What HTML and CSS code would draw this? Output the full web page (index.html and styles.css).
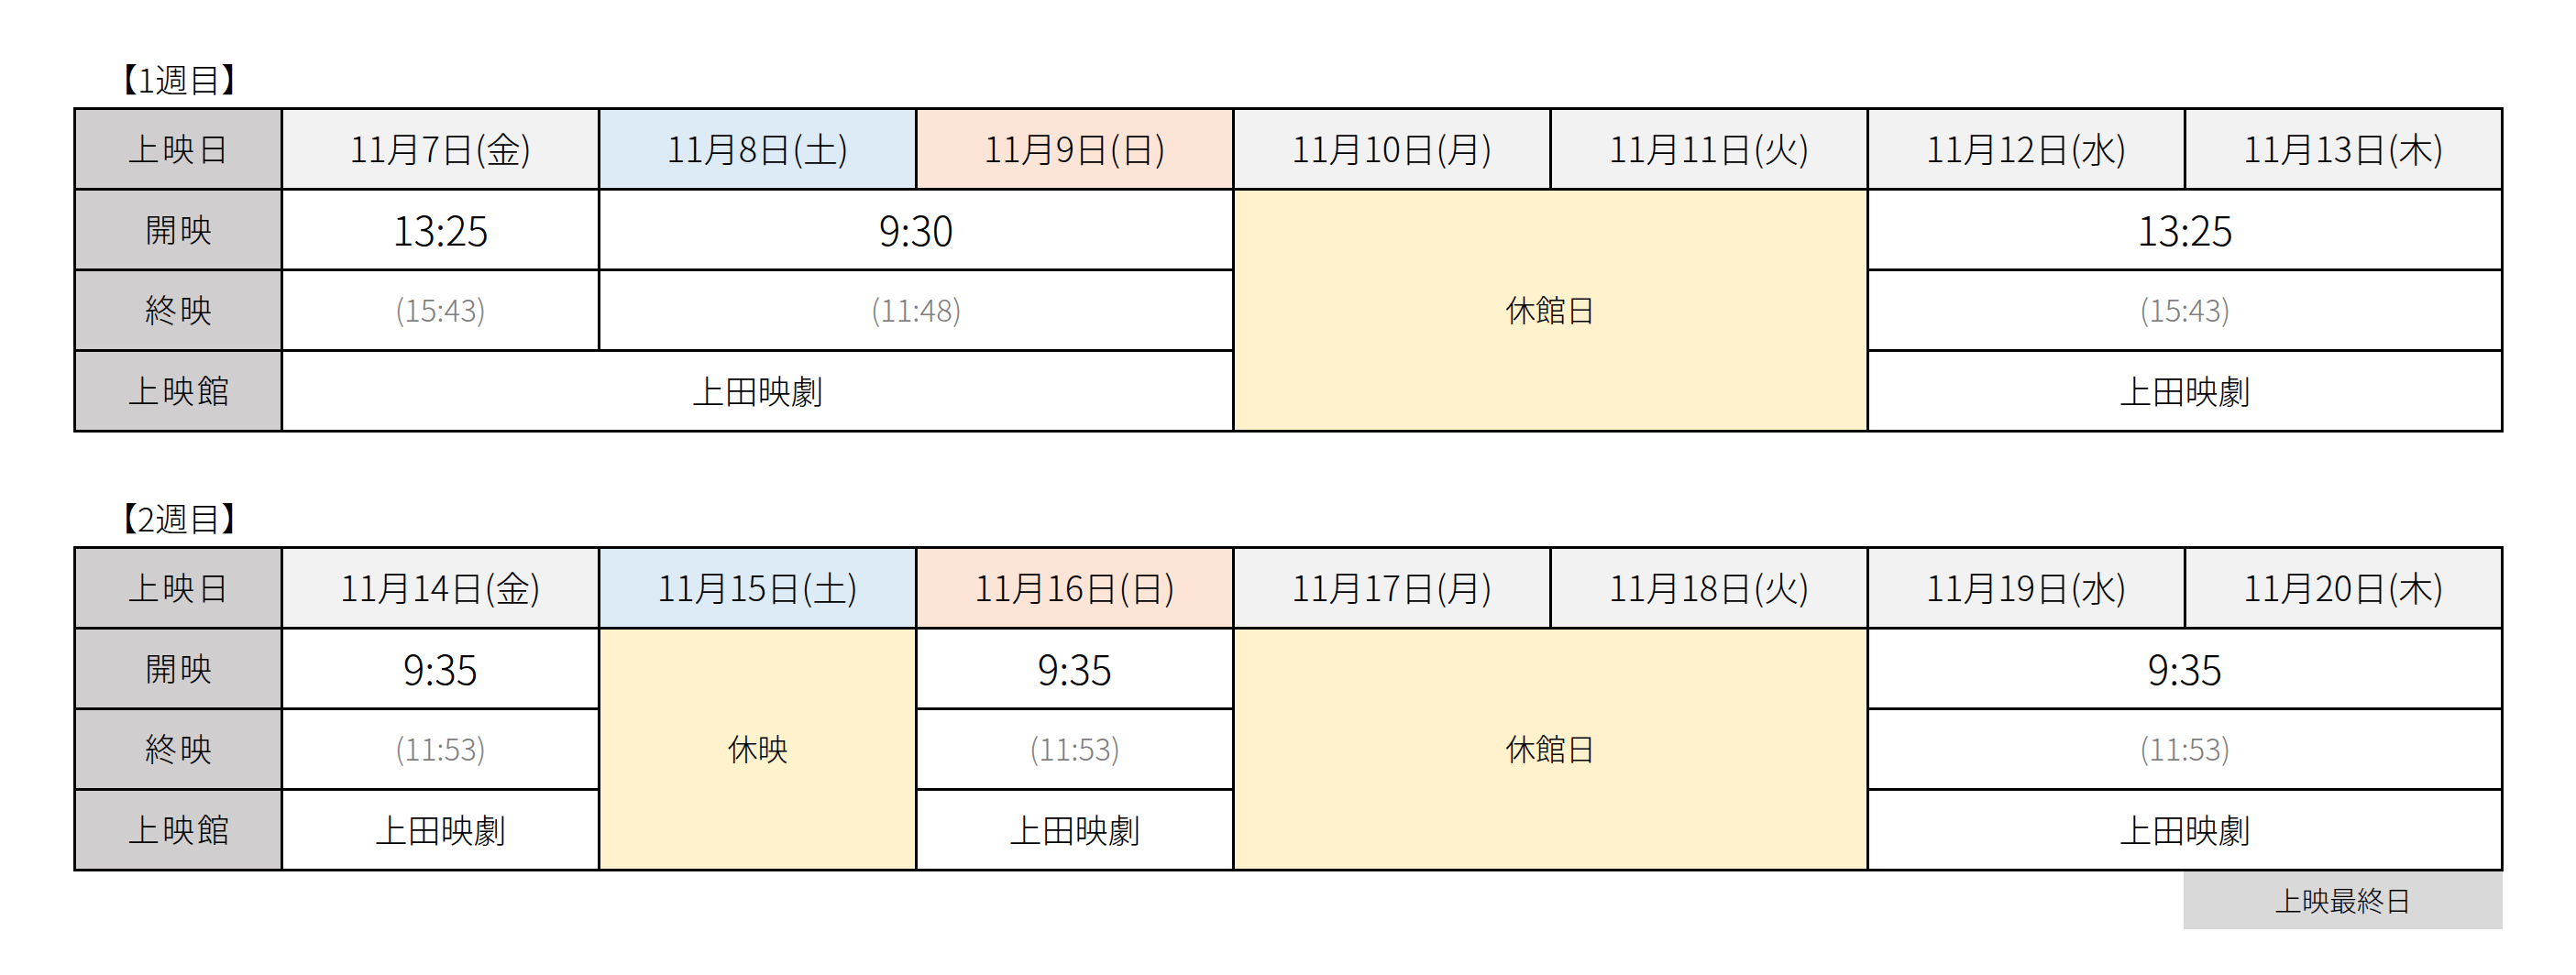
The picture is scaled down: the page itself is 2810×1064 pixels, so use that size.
FILE: index.html
```html
<!DOCTYPE html>
<html lang="ja">
<head>
<meta charset="utf-8">
<title>上映スケジュール</title>
<link rel="stylesheet" href="styles.css">
</head>
<body>
<div class="page">
  <section class="week">
    <h2 class="week-title">【1週目】</h2>
    <div class="sched">
      <div class="cell label">上映日</div>
      <div class="cell day">11月7日(金)</div>
      <div class="cell day sat">11月8日(土)</div>
      <div class="cell day sun">11月9日(日)</div>
      <div class="cell day">11月10日(月)</div>
      <div class="cell day">11月11日(火)</div>
      <div class="cell day">11月12日(水)</div>
      <div class="cell day">11月13日(木)</div>

      <div class="cell label">開映</div>
      <div class="cell start">13:25</div>
      <div class="cell start span2">9:30</div>
      <div class="cell closed span2 rows3">休館日</div>
      <div class="cell start span2">13:25</div>

      <div class="cell label">終映</div>
      <div class="cell end">(15:43)</div>
      <div class="cell end span2">(11:48)</div>
      <div class="cell end span2">(15:43)</div>

      <div class="cell label">上映館</div>
      <div class="cell venue span3">上田映劇</div>
      <div class="cell venue span2">上田映劇</div>
    </div>
  </section>

  <section class="week week2">
    <h2 class="week-title">【2週目】</h2>
    <div class="sched">
      <div class="cell label">上映日</div>
      <div class="cell day">11月14日(金)</div>
      <div class="cell day sat">11月15日(土)</div>
      <div class="cell day sun">11月16日(日)</div>
      <div class="cell day">11月17日(月)</div>
      <div class="cell day">11月18日(火)</div>
      <div class="cell day">11月19日(水)</div>
      <div class="cell day">11月20日(木)</div>

      <div class="cell label">開映</div>
      <div class="cell start">9:35</div>
      <div class="cell closed rows3">休映</div>
      <div class="cell start">9:35</div>
      <div class="cell closed span2 rows3">休館日</div>
      <div class="cell start span2">9:35</div>

      <div class="cell label">終映</div>
      <div class="cell end">(11:53)</div>
      <div class="cell end">(11:53)</div>
      <div class="cell end span2">(11:53)</div>

      <div class="cell label">上映館</div>
      <div class="cell venue">上田映劇</div>
      <div class="cell venue">上田映劇</div>
      <div class="cell venue span2">上田映劇</div>
    </div>
    <div class="legend-row">
      <div class="legend">上映最終日</div>
    </div>
  </section>
</div>
</body>
</html>
```
FILE: styles.css
```css
html, body {
  margin: 0;
  padding: 0;
  background: #ffffff;
}

body {
  font-family: "Noto Sans CJK JP", "Noto Sans", sans-serif;
  font-weight: 300;
  color: #000000;
}

.page {
  padding: 61px 0 0 80px;
}

.week {
  width: 2651px;
}

.week2 {
  margin-top: 68px;
}

.week-title {
  margin: 0 0 8px 0;
  padding-left: 34px;
  font-size: 36px;
  line-height: 48px;
  font-weight: 300;
}

.sched {
  display: grid;
  grid-template-columns: 223px repeat(7, 343px);
  grid-template-rows: repeat(4, 85px);
  gap: 3px;
  padding: 3px;
  background: #000000;
}

.cell {
  display: flex;
  align-items: center;
  justify-content: center;
  padding-bottom: 4px;
  background: #ffffff;
  white-space: nowrap;
}

.span2 { grid-column: span 2; }
.span3 { grid-column: span 3; }
.rows3 { grid-row: span 3; }

.label {
  background: #d0cece;
  font-size: 35px;
  letter-spacing: 3px;
  text-indent: 3px;
}

.day {
  background: #f2f2f2;
  font-size: 38px;
}

.day.sat { background: #ddebf7; }
.day.sun { background: #fce4d6; }

.start {
  font-size: 44px;
}

.end {
  font-size: 33px;
  color: #7f7f7f;
}

.venue {
  font-size: 36px;
}

.closed {
  background: #fff2cc;
  font-size: 33px;
}

.legend-row {
  display: flex;
  justify-content: flex-end;
}

.legend {
  width: 348px;
  height: 63px;
  margin-right: 1px;
  padding-bottom: 3px;
  box-sizing: border-box;
  display: flex;
  align-items: center;
  justify-content: center;
  background: #d9d9d9;
  font-size: 30px;
}
```
